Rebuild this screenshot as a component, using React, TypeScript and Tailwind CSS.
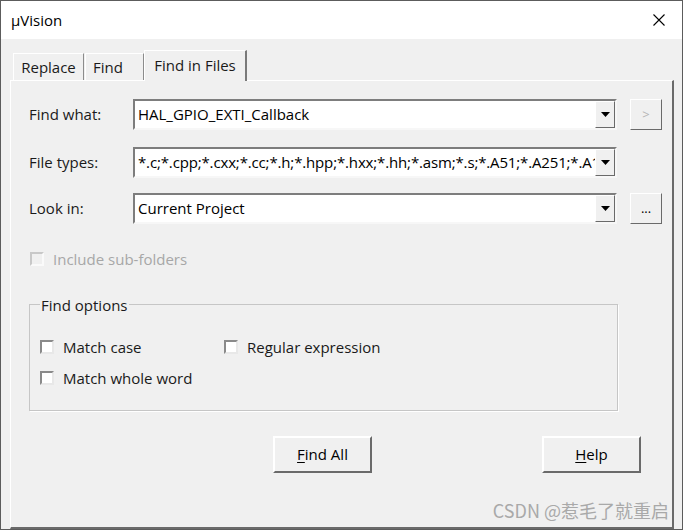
import React from 'react'

const font = { fontFamily: '"Open Sans", "Noto Sans CJK SC", sans-serif' }

function Combo({ text, tight }: { text: string; tight?: boolean }) {
  return (
    <div className="flex h-[31px] w-[484px] border-2 border-t-[#7d7d7d] border-l-[#7d7d7d] border-r-[#f7f7f7] border-b-[#f7f7f7] bg-white">
      <div className={`flex-1 overflow-hidden whitespace-nowrap pl-[3px] text-[15px] leading-[26px] text-black ${tight ? 'tracking-[-0.15px]' : ''}`}>{text}</div>
      <div className="flex h-[27px] w-[20px] items-center justify-center border border-t-white border-l-white border-r-[#6a6a6a] border-b-[#6a6a6a] bg-[#f0f0f0]">
        <svg width="9" height="5" viewBox="0 0 9 5">
          <path d="M0 0h9L4.5 5z" fill="#000" />
        </svg>
      </div>
    </div>
  )
}

function SmallButton({ label, disabled }: { label: string; disabled?: boolean }) {
  return (
    <div className={`ml-[13px] flex h-[31px] w-[32px] items-center justify-center border border-t-white border-l-white border-r-[#6a6a6a] border-b-[#6a6a6a] bg-[#f0f0f0] text-[13px] ${disabled ? 'text-[#b5b5b5]' : 'text-black'}`}>
      {label}
    </div>
  )
}

function Check({ label, disabled }: { label: string; disabled?: boolean }) {
  return (
    <div className="flex items-center">
      <div className={`h-[14px] w-[14px] border-2 ${disabled ? 'border-t-[#c8c8c8] border-l-[#c8c8c8] border-r-[#fafafa] border-b-[#fafafa] bg-[#f0f0f0]' : 'border-t-[#8a8a8a] border-l-[#8a8a8a] border-r-[#e8e8e8] border-b-[#e8e8e8] bg-white'}`} />
      <span className={`ml-[9px] text-[15px] ${disabled ? 'text-[#a7a7a7]' : 'text-[#1a1a1a]'}`}>{label}</span>
    </div>
  )
}

function BigButton({ first, rest }: { first: string; rest: string }) {
  return (
    <div className="flex h-[37px] w-[99px] items-center justify-center border-2 border-t-white border-l-white border-r-[#6a6a6a] border-b-[#6a6a6a] bg-[#f0f0f0] text-[15px] text-black">
      <span className="underline underline-offset-2">{first}</span>
      {rest}
    </div>
  )
}

export default function App() {
  return (
    <div style={font} className="flex h-[530px] w-[683px] flex-col border border-[#5c5c5c] bg-[#f0f0f0]">
      <div className="flex h-[38px] items-center justify-between bg-white pl-[10px] pr-[17px]">
        <span className="text-[15px] text-black">µVision</span>
        <svg width="12" height="12" viewBox="0 0 12 12">
          <path d="M0.5 0.5L11.5 11.5M11.5 0.5L0.5 11.5" stroke="#000" strokeWidth="1.1" />
        </svg>
      </div>

      <div className="flex flex-1 flex-col pl-[9px] pr-[8px] pt-[11px]">
        <div className="flex h-[30px] items-end pl-[3px]">
          <div className="flex h-[27px] w-[71px] items-center justify-center border-l border-t border-r border-l-white border-t-white border-r-[#8c8c8c] text-[15px] text-[#1a1a1a]">Replace</div>
          <div className="ml-[1px] flex h-[27px] w-[59px] items-center border-l border-t border-r border-l-white border-t-white border-r-[#8c8c8c] pl-[7px] text-[15px] text-[#1a1a1a]">Find</div>
          <div className="relative z-10 -mb-[1px] flex h-[31px] w-[103px] items-center justify-center border-l border-t border-r-2 border-l-white border-t-white border-r-[#7a7a7a] bg-[#f0f0f0] pb-[2px] text-[15px] text-[#1a1a1a]">Find in Files</div>
        </div>

        <div className="relative flex flex-1 flex-col border-l border-t border-l-white border-t-white border-r-2 border-b-2 border-r-[#6a6a6a] border-b-[#6a6a6a] pl-[18px] pt-[18px]">
          <div className="flex items-center">
            <span className="w-[104px] text-[15px] text-[#1a1a1a]">Find what:</span>
            <Combo text="HAL_GPIO_EXTI_Callback" />
            <SmallButton label=">" disabled />
          </div>
          <div className="mt-[17px] flex items-center">
            <span className="w-[104px] text-[15px] text-[#1a1a1a]">File types:</span>
            <Combo text="*.c;*.cpp;*.cxx;*.cc;*.h;*.hpp;*.hxx;*.hh;*.asm;*.s;*.A51;*.A251;*.A16" tight />
          </div>
          <div className="mt-[15px] flex items-center">
            <span className="w-[104px] text-[15px] text-[#1a1a1a]">Look in:</span>
            <Combo text="Current Project" />
            <SmallButton label="..." />
          </div>

          <div className="mt-[24px] pl-[1px]">
            <Check label="Include sub-folders" disabled />
          </div>

          <fieldset className="mt-[23px] h-[117px] w-[589px] border border-[#c6c6c6] pl-[10px] shadow-[1px_1px_0_white]">
            <legend className="px-[1px] text-[15px] text-[#1a1a1a]">Find options</legend>
            <div className="mt-[20px] flex">
              <div className="w-[184px]"><Check label="Match case" /></div>
              <Check label="Regular expression" />
            </div>
            <div className="mt-[8px]">
              <Check label="Match whole word" />
            </div>
          </fieldset>

          <div className="mt-[25px] flex pl-[244px]">
            <BigButton first="F" rest="ind All" />
            <div className="ml-[170px]">
              <BigButton first="H" rest="elp" />
            </div>
          </div>

          <div className="absolute bottom-[3px] right-[3px] text-[18px] text-[#a9a9a9]" style={{ fontFamily: '"Noto Sans CJK SC", sans-serif' }}>CSDN @惹毛了就重启</div>
        </div>
      </div>
    </div>
  )
}
